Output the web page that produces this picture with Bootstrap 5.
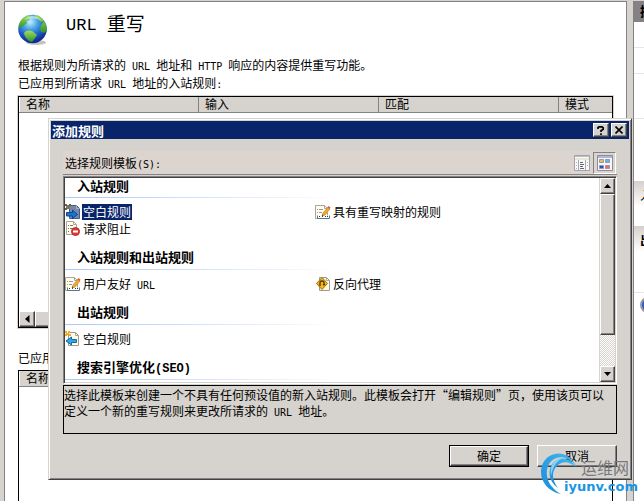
<!DOCTYPE html>
<html lang="zh-CN">
<head>
<meta charset="utf-8">
<meta name="viewport" content="width=device-width, initial-scale=1">
<title>URL 重写</title>
<link href="https://cdn.jsdelivr.net/npm/bootstrap@5.3.0/dist/css/bootstrap.min.css" rel="stylesheet">
<style>
:root { --face: #d6d3ce; --shade: #848284; --dark: #424142; --navy: #08246b; }
body { background: var(--face); color: #000; font: 12px/18px "Noto Sans CJK SC", sans-serif; }
.latin { font-family: "DejaVu Sans Mono", monospace; font-size: 10px; line-height: 1; white-space: pre; }
.heavy { font-size: 13px; font-weight: 700; }
.heavy .latin { font-family: "Liberation Mono", monospace; font-size: 12px; }
svg { display: block; flex: none; }

.main-pane { border: 1px solid var(--shade); border-bottom: 0; margin: 1px 0 0 4px; padding: 0 13px; min-width: 0; }
.page-title { font-size: 19px; line-height: 24px; font-weight: 400; }
.page-title .latin { font-family: "Liberation Mono", monospace; font-size: 17px; vertical-align: 1px; }
.page-head { padding: 9px 0 7px; gap: 18px; }
.rule-grid { border: 1px solid #000; outline: 1px solid var(--face); height: 232px; background: #fff; margin-top: 4px; flex: none; }
.rule-grid table { table-layout: fixed; }
.rule-grid th { font-weight: 400; background: var(--face); border-right: 1px solid var(--shade); border-bottom: 1px solid var(--shade); border-left: 1px solid #fff; height: 15px; line-height: 14px; padding: 0 5px 0 6px; }
.rule-grid th:last-child { border-right: 0; }
.first-col { width: 179px; }
.wide-col { width: 180px; }
.second-grid { margin-top: 3px; height: auto; min-height: 0; flex: 1; border-bottom: 0; outline: 0; }
.second-label { margin-top: 21px; }

.bevel { background: var(--face); border: 1px solid; border-color: #fff var(--dark) var(--dark) #fff; box-shadow: inset -1px -1px var(--shade); color: #000; padding: 0; border-radius: 0; display: flex; align-items: center; justify-content: center; }
.scroll-btn { width: 16px; height: 16px; flex: none; }
.dither { background: repeating-conic-gradient(var(--face) 0 25%, #fff 0 50%) 0 0 / 2px 2px; }

.side-pane { width: 11px; margin: 1px 0 0 6px; border-left: 1px solid var(--shade); background: #fff; white-space: nowrap; overflow: hidden; flex: none; }
.side-row { padding-left: 6px; height: 45px; overflow: hidden; }
.side-title { height: 21px; padding-top: 1px; background: var(--shade); }
.side-blank { height: 26px; border-bottom: 1px solid #e8e6e4; }
.side-blank.tall { height: 45px; }
.side-space { height: 62px; }
.side-fade { background: linear-gradient(#d6cfcc, #fff 26px); padding-top: 5px; }
.side-last { height: 67px; border-bottom: 1px solid #e8e6e4; }

.rule-dialog { position: absolute; top: 118px; left: 48px; right: 12px; background: var(--face); border: 1px solid; border-color: var(--face) var(--dark) var(--dark) var(--face); box-shadow: inset 1px 1px #fff, inset -1px -1px var(--shade); padding: 2px; }
.title-strip { background: var(--navy); color: #fff; height: 18px; padding: 0 2px 0 1px; gap: 2px; }
.title-btn { width: 16px; height: 14px; }
.dialog-main { padding: 12px 12px 10px; }
.tool-strip { background: #dcd4cf; height: 24px; border-bottom: 1px solid var(--shade); padding: 0 1px 0 2px; }
.view-btn { width: 23px; height: 22px; border: 0; padding: 0; background: transparent; display: flex; align-items: center; justify-content: center; }
.view-btn.on { border: 1px solid; border-color: var(--shade) #fff #fff var(--shade); }
.template-list { margin-top: 1px; height: 208px; border: 1px solid; border-color: var(--shade) #fff #fff var(--shade); box-shadow: inset 1px 1px var(--dark), inset -1px -1px var(--face); padding: 1px; }
.template-list .scroller { background: #fff; overflow: hidden; min-width: 0; }
.group-head { margin: 0; height: 33px; line-height: 16px; padding: 12px 12px 0; background: linear-gradient(90deg, #a9c7f7, #fff 275px) bottom / 100% 1px no-repeat; }
.group-head.first { height: 20px; padding-top: 0; }
.group-items { display: grid; grid-template-columns: 250px 1fr; padding-top: 5px; }
.tpl { border: 0; background: none; padding: 0; height: 17px; line-height: 16px; display: flex; align-items: center; gap: 1px; color: #000; text-align: left; }
.tpl > span { padding: 0 1px; white-space: nowrap; }
.tpl.picked > span { background: var(--navy); color: #fff; }
.v-scroll { width: 16px; border-left: 1px solid var(--face); flex: none; }
.v-scroll .scroll-btn { width: 15px; }
.thumb { height: 141px; flex: none; }
.info-box { border: 1px solid #000; height: 49px; margin: 1px 0 11px; padding: 1px 8px 0 0; line-height: 16px; }
.push { width: 80px; height: 22px; line-height: 18px; }
.push.default-btn { outline: 1px solid #000; outline-offset: -1px; border: 2px solid; border-color: #fff var(--dark) var(--dark) #fff; }

.site-mark { position: absolute; top: 452px; right: 6px; pointer-events: none; }
.mark-cn { font-size: 16px; line-height: 22px; color: #77777d; padding-left: 17px; margin-top: 4px; }
.mark-url { font: 700 13px/17px "DejaVu Sans", sans-serif; color: #1896e4; }
.mark-words { margin-left: -14px; }
</style>
<script src="https://cdn.jsdelivr.net/npm/bootstrap@5.3.0/dist/js/bootstrap.bundle.min.js"></script>
</head>
<body class="vh-100 overflow-hidden position-relative">
<svg width="0" height="0" class="position-absolute" aria-hidden="true">
  <defs>
    <symbol id="edit-page" viewBox="0 0 16 16">
      <path d="M.5 1.500h9l3 3v10H.5z" fill="#fffdf0" stroke="#aaa795"/>
      <path d="M9.500 1.500v3h3" fill="none" stroke="#aaa795"/>
      <path d="M2 5.500h1m1 0h4M2 8.500h1m1 0h3" stroke="#99998c"/>
      <path d="M2.500 11.500v3h12v-3" fill="#fff" stroke="#5d7288"/>
      <path d="M4 12.500h1m2 0h1m2 0h1m1 0h1" stroke="#24364c"/>
      <path d="M7 12l1-3 5-6 2 2-5 6z" fill="#efa82c" stroke="#b98b41" stroke-width=".7"/>
      <path d="M12.500 3.500l1-1.500 2 1.500-1 1.500z" fill="#e45448"/>
      <path d="M7 12l.5-1.500 1 1z" fill="#333"/>
    </symbol>
  </defs>
</svg>

<div class="d-flex h-100">
  <main class="main-pane bg-white flex-grow-1 d-flex flex-column">
    <header class="page-head d-flex">
      <svg width="30" height="34" viewBox="0 0 30 34" aria-hidden="true">
        <defs>
          <radialGradient id="sea" cx=".42" cy=".25" r=".75"><stop offset="0" stop-color="#c5f0ff"/><stop offset=".35" stop-color="#49a4e4"/><stop offset=".7" stop-color="#1c55c4"/><stop offset="1" stop-color="#0a2485"/></radialGradient>
          <linearGradient id="land" x2="0" y2="1"><stop offset="0" stop-color="#a6dc60"/><stop offset="1" stop-color="#2a9427"/></linearGradient>
        </defs>
        <ellipse cx="18" cy="31.500" rx="10" ry="2.500" fill="#c5c2c2"/>
        <circle cx="14.500" cy="18" r="14.300" fill="url(#sea)"/>
        <path d="M1 16C1 10 5 6 10 4l3 2-2 3-3 1 1 2-4 3-3 2z" fill="url(#land)"/>
        <path d="M17 4c4 0 7 3 9 6l-3 1-3-3-3-2zM23 14l3-4 2 4 1 5-3 3-3-1-1-3z" fill="url(#land)"/>
        <path d="M6 22c2-3 5-3 8-2l5 4-2 3-3 4c-4-1-7-4-8-9z" fill="url(#land)"/>
        <path d="M6 9q8-8 17 0-8-3-17 0" fill="#e8fcff" opacity=".5"/>
      </svg>
      <h1 class="page-title mb-0"><span class="latin">URL </span>重写</h1>
    </header>
    <p class="mb-0 mt-1">根据规则为所请求的<span class="latin"> URL </span>地址和<span class="latin"> HTTP </span>响应的内容提供重写功能。</p>
    <p class="mb-0">已应用到所请求<span class="latin"> URL </span>地址的入站规则<span class="latin">:</span></p>
    <div class="rule-grid d-flex flex-column justify-content-between">
      <table class="w-100">
        <colgroup><col class="first-col"><col class="wide-col"><col class="wide-col"><col></colgroup>
        <thead><tr><th scope="col">名称</th><th scope="col">输入</th><th scope="col">匹配</th><th scope="col">模式</th></tr></thead>
      </table>
      <div class="d-flex dither">
        <button type="button" class="bevel scroll-btn" aria-label="向左"><svg width="5" height="8" viewBox="0 0 5 8"><path d="M4.500 0v8L0 4z"/></svg></button>
        <div class="bevel flex-grow-1"></div>
      </div>
    </div>
    <p class="mb-0 second-label">已应用</p>
    <div class="rule-grid second-grid">
      <table class="w-100"><thead><tr><th scope="col">名称</th></tr></thead></table>
    </div>
  </main>

  <aside class="side-pane">
    <div class="side-row side-title heavy">操作</div>
    <div class="side-row side-blank"></div>
    <div class="side-row side-blank"></div>
    <div class="side-row side-blank tall"></div>
    <div class="side-row side-space"></div>
    <div class="side-row side-fade">入站规则</div>
    <div class="side-row side-fade side-last heavy">出站规则</div>
    <div class="side-row pt-1"><svg width="16" height="16" viewBox="0 0 16 16"><circle cx="8" cy="8" r="7" fill="#295bd1" stroke="#99989c" stroke-width="2"/></svg></div>
  </aside>
</div>

<section class="rule-dialog" role="dialog" aria-labelledby="dialog-title">
  <div class="title-strip d-flex align-items-center">
    <h2 class="heavy mb-0 flex-grow-1 lh-1" id="dialog-title">添加规则</h2>
    <button type="button" class="bevel title-btn" aria-label="帮助"><svg width="8" height="9" viewBox="0 0 8 9"><path d="M1 3V1.500L2 .8h3l1.200 1v1.400L4 4.700V6M4 7.200V9" fill="none" stroke="#000" stroke-width="1.700"/></svg></button>
    <button type="button" class="bevel title-btn" aria-label="关闭"><svg width="8" height="8" viewBox="0 0 8 8"><path d="M.5.5l7 7m0-7l-7 7" stroke="#000" stroke-width="1.600"/></svg></button>
  </div>
  <div class="dialog-main">
    <div class="tool-strip d-flex align-items-center">
      <span class="flex-grow-1" id="list-label">选择规则模板<span class="latin">(S):</span></span>
      <button type="button" class="view-btn" aria-label="详细信息"><svg width="16" height="16" viewBox="0 0 16 16"><path d="M.5.5h15v15H.5z" fill="#f8f7f8" stroke="#a5a2aa"/><path d="M1 1.500h14" stroke="#b5bdd5"/><path d="M1 4h14" stroke="#ded7b2"/><path d="M4.500 5v10m7-10v10" stroke="#aaa8b3"/><path d="M6 7.500h3m-3 2h4m-4 2h3m-3 2h4" stroke="#686570"/><path d="M2 7.500h1m-1 3h1m-1 3h1m10-6h1m-1 3h1" stroke="#aab0ce"/></svg></button>
      <button type="button" class="view-btn on" aria-label="图标" aria-pressed="true"><svg width="16" height="16" viewBox="0 0 16 16"><path d="M.5.5h15v15H.5z" fill="#f7f6fa" stroke="#8e8c9c"/><path d="M1 2h14" stroke="#aab7e0" stroke-width="2"/><g stroke="#9997a2"><path d="M2.500 4.500h4v3h-4z" fill="#d8ca50"/><path d="M8.500 4.500h4v3h-4z" fill="#62b9df"/><path d="M2.500 10.500h4v3h-4z" fill="#3949cc"/><path d="M8.500 10.500h4v3h-4z" fill="#ec7250"/></g></svg></button>
    </div>
    <div class="template-list d-flex" aria-labelledby="list-label">
      <div class="scroller flex-grow-1">
        <h3 class="group-head first heavy">入站规则</h3>
        <div class="group-items">
          <button type="button" class="tpl picked"><svg width="16" height="16" viewBox="0 0 16 16"><path d="M4.500 1.500h7l3 3v10h-10z" fill="#7887a8" stroke="#465d8b"/><path d="M11.500 1.500v3h3" fill="none" stroke="#aab4c9"/><path d="M1 1h4v4H1z" fill="#80735a"/><path d="M0 0h2v2H0zm4 0h2v2H4zM0 4h2v2H0z" fill="#655f57"/><path d="M1.500 8.500h6V6l5 4.500-5 4v-2.500h-6z" fill="#1775d0" stroke="#0b4694"/></svg><span>空白规则</span></button>
          <button type="button" class="tpl"><svg width="16" height="16" viewBox="0 0 16 16"><use href="#edit-page"/></svg><span>具有重写映射的规则</span></button>
          <button type="button" class="tpl"><svg width="16" height="16" viewBox="0 0 16 16"><path d="M1.500.5h7l3 3v10h-10z" fill="#fffdf0" stroke="#aaa795"/><path d="M8.500.5v3h3" fill="none" stroke="#aaa795"/><path d="M3 4.500h1m1 0h3M3 7.500h1m1 0h2M3 10.500h1" stroke="#77776c"/><circle cx="10.500" cy="10.500" r="4" fill="#df3a37" stroke="#b52a2c"/><path d="M8 10.500h5" stroke="#fff" stroke-width="2"/></svg><span>请求阻止</span></button>
        </div>
        <h3 class="group-head heavy">入站规则和出站规则</h3>
        <div class="group-items">
          <button type="button" class="tpl"><svg width="16" height="16" viewBox="0 0 16 16"><use href="#edit-page"/></svg><span>用户友好<span class="latin"> URL</span></span></button>
          <button type="button" class="tpl"><svg width="16" height="16" viewBox="0 0 16 16"><path d="M4.500 1.500h7l3 3v10h-10z" fill="#fffbe0" stroke="#9c9a90"/><path d="M11.500 1.500v3h3" fill="none" stroke="#aaa795"/><path d="M7 1.500l5.500 6L7 13.500 1.500 7.500z" fill="#f5b51b" stroke="#a66f08"/><path d="M5 10V6.500Q5 5 7 5t2 1.500V8" fill="none" stroke="#4b3709" stroke-width="1.300"/><path d="M7.500 8h3L9 10z" fill="#4b3709"/></svg><span>反向代理</span></button>
        </div>
        <h3 class="group-head heavy">出站规则</h3>
        <div class="group-items">
          <button type="button" class="tpl"><svg width="16" height="16" viewBox="0 0 16 16"><path d="M3.500 1.500h7l3 3v10h-10z" fill="#fffbe5" stroke="#9c9a90"/><path d="M10.500 1.500v3h3" fill="none" stroke="#aaa795"/><path d="M0 0h2v2h1V0h2v2H4v1h2v2H4V4H2v1H0V3h1V2H0z" fill="#f3a728"/><path d="M11.500 8.500h-5V6L1 10l5.500 4v-2.500h5z" fill="#2ca9e9" stroke="#126ca8"/></svg><span>空白规则</span></button>
        </div>
        <h3 class="group-head heavy">搜索引擎优化<span class="latin">(SEO)</span></h3>
      </div>
      <div class="v-scroll dither d-flex flex-column">
        <button type="button" class="bevel scroll-btn" aria-label="向上"><svg width="7" height="4" viewBox="0 0 7 4"><path d="M0 4h7L3.500 0z"/></svg></button>
        <div class="bevel thumb"></div>
        <button type="button" class="bevel scroll-btn mt-auto" aria-label="向下"><svg width="7" height="4" viewBox="0 0 7 4"><path d="M0 0h7L3.500 4z"/></svg></button>
      </div>
    </div>
    <div class="info-box">选择此模板来创建一个不具有任何预设值的新入站规则。此模板会打开“编辑规则”页，使用该页可以定义一个新的重写规则来更改所请求的<span class="latin"> URL </span>地址。</div>
    <div class="d-flex justify-content-end gap-2">
      <button type="button" class="bevel push default-btn">确定</button>
      <button type="button" class="bevel push">取消</button>
    </div>
  </div>
</section>

<div class="site-mark d-flex">
  <svg width="38" height="43" viewBox="0 0 38 43" aria-hidden="true">
    <defs><linearGradient id="swirl" x1="0" y1="1" x2="1" y2="0"><stop offset="0" stop-color="#168bdc"/><stop offset="1" stop-color="#48b9ef"/></linearGradient></defs>
    <path d="M21 42C5 39-3 24 3 11 10-2 29-3 37 16 28 1 13 3 8 14 4 25 10 36 21 42z" fill="url(#swirl)"/>
    <path d="M18 36C8 29 7 17 14 10c7-6 17-4 21 5-6-6-13-6-18-1-6 6-5 14 1 22z" fill="url(#swirl)"/>
    <path d="M11 24C9 13 15 6 24 6c-7 2-11 8-13 18z" fill="#87d1f5"/>
  </svg>
  <div class="mark-words">
    <div class="mark-cn">运维网</div>
    <div class="mark-url">iyunv.com</div>
  </div>
</div>
</body>
</html>
